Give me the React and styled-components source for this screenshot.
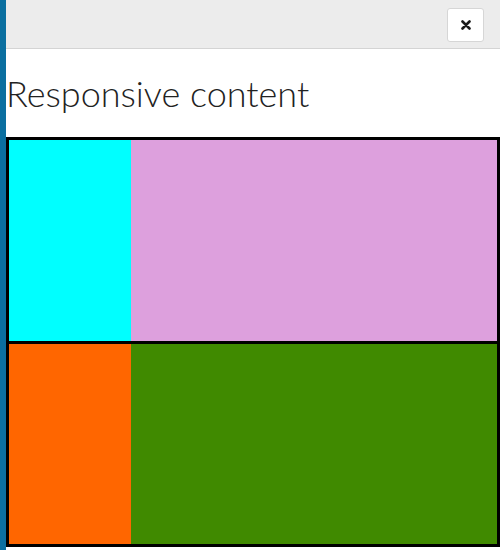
import styled, { createGlobalStyle } from "styled-components";

const GlobalStyle = createGlobalStyle`
  html, body {
    margin: 0;
    padding: 0;
    background: #fff;
  }
  body {
    font-family: Lato, "Liberation Sans", sans-serif;
  }
`;

const Page = styled.div`
  height: 550px;
  border-left: 6px solid #0b6fa0;
  box-sizing: border-box;
  display: flex;
  flex-direction: column;
  overflow: hidden;
`;

const TopBar = styled.div`
  height: 49px;
  background: #ececec;
  border-bottom: 1px solid #d4d4d4;
  display: flex;
  justify-content: flex-end;
  align-items: flex-start;
  padding: 8px 16px 0 0;
  box-sizing: border-box;
  flex-shrink: 0;
`;

const CloseButton = styled.button`
  width: 37px;
  height: 34px;
  background: #fff;
  border: 1px solid #d6d6d6;
  border-radius: 3px;
  display: flex;
  align-items: center;
  justify-content: center;
  padding: 0;
  cursor: pointer;
  color: #222;
`;

const Title = styled.h1`
  margin: 20px 0 0 0;
  font-family: Lato, "Liberation Sans", sans-serif;
  font-weight: 300;
  font-size: 36px;
  line-height: 48px;
  color: #222;
  height: 68px;
  flex-shrink: 0;
`;

const Grid = styled.div`
  border: 3px solid #000;
  display: flex;
  flex-direction: column;
  height: 410px;
  box-sizing: border-box;
  flex-shrink: 0;
`;

const Row = styled.div`
  display: flex;
  flex: 1;
  & + & {
    border-top: 3px solid #000;
  }
`;

const Cell = styled.div`
  background: ${(p) => p.$bg};
  flex: ${(p) => p.$grow};
`;

export default function App() {
  return (
    <>
      <GlobalStyle />
      <Page>
        <TopBar>
          <CloseButton aria-label="Close">
            <svg width="10" height="10" viewBox="0 0 10 10">
              <path d="M1.5 1.5 L8.5 8.5 M8.5 1.5 L1.5 8.5" stroke="#1a1a1a" strokeWidth="2.6" strokeLinecap="round" />
            </svg>
          </CloseButton>
        </TopBar>
        <Title>Responsive content</Title>
        <Grid>
          <Row>
            <Cell $bg="#00ffff" $grow={1} />
            <Cell $bg="#dda0dd" $grow={3} />
          </Row>
          <Row>
            <Cell $bg="#ff6600" $grow={1} />
            <Cell $bg="#408a00" $grow={3} />
          </Row>
        </Grid>
      </Page>
    </>
  );
}
